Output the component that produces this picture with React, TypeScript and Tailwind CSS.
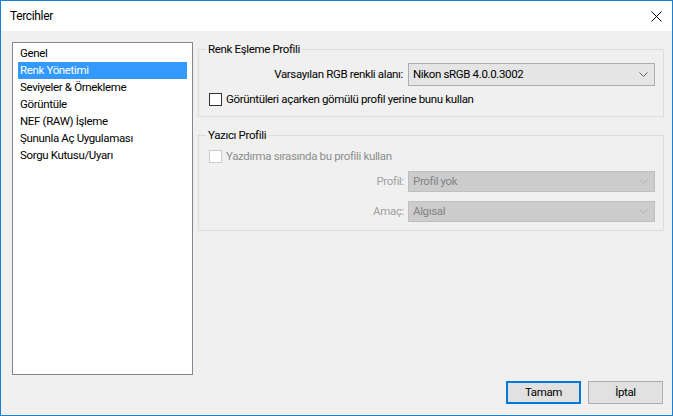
import React from "react";

const font = { fontFamily: 'Roboto, "Segoe UI", sans-serif' };

const items = [
  "Genel",
  "Renk Yönetimi",
  "Seviyeler & Örnekleme",
  "Görüntüle",
  "NEF (RAW) İşleme",
  "Şununla Aç Uygulaması",
  "Sorgu Kutusu/Uyarı",
];

const Chevron: React.FC<{ disabled?: boolean }> = ({ disabled }) => (
  <svg width="9" height="5" viewBox="0 0 9 5" className="mr-[6px]">
    <path d="M0.5 0.5 L4.5 4.5 L8.5 0.5" fill="none" stroke={disabled ? "#b3b3b3" : "#606060"} strokeWidth="1" />
  </svg>
);

const Select: React.FC<{ value: string; disabled?: boolean; h: string }> = ({ value, disabled, h }) => (
  <div
    className={`flex w-[247px] items-center justify-between border pl-[4px] ${h} ${
      disabled ? "border-[#bfbfbf] bg-[#cccccc] text-[#838383]" : "border-[#adadad] bg-[#e5e5e5] text-black"
    }`}
  >
    <span>{value}</span>
    <Chevron disabled={disabled} />
  </div>
);

const Check: React.FC<{ label: string; disabled?: boolean }> = ({ label, disabled }) => (
  <div className="flex items-center">
    <div className={`h-[13px] w-[13px] border bg-white ${disabled ? "border-[#cccccc]" : "border-[#333333]"}`} />
    <span className={`ml-[4px] ${disabled ? "text-[#8d8d8d]" : "text-black"}`}>{label}</span>
  </div>
);

export default function App() {
  return (
    <div
      className="flex h-[416px] w-[673px] flex-col border border-[#1c7fd0] bg-[#f0f0f0] text-[11.5px] tracking-[-0.35px] text-black"
      style={font}
    >
      {/* title bar */}
      <div className="flex h-[30px] items-center justify-between bg-white pl-[9px] pr-[10px] text-[12px]">
        <span>Tercihler</span>
        <svg width="11" height="11" viewBox="0 0 11 11">
          <path d="M0.5 0.5 L10.5 10.5 M10.5 0.5 L0.5 10.5" stroke="#000" strokeWidth="1" />
        </svg>
      </div>

      <div className="flex flex-1 flex-col">
        <div className="flex pl-[11px] pt-[11px]">
          {/* list */}
          <div className="h-[333px] w-[181px] border border-[#828790] bg-white px-[5px] pt-[2px]">
            {items.map((it, i) => (
              <div
                key={it}
                className={`flex h-[17px] items-center pl-[2px] ${i === 1 ? "bg-[#3399ff] text-white" : ""}`}
              >
                {it}
              </div>
            ))}
          </div>

          {/* right panel */}
          <div className="ml-[5px] flex w-[466px] flex-col">
            <fieldset className="h-[75px] border border-[#dcdcdc] pl-[10px] pr-[8px]">
              <legend className="ml-[-3px] px-[2px] leading-[15px]">Renk Eşleme Profili</legend>
              <div className="mt-[6px] flex items-center justify-end">
                <span className="mr-[5px]">Varsayılan RGB renkli alanı:</span>
                <Select value="Nikon sRGB 4.0.0.3002" h="h-[23px]" />
              </div>
              <div className="mt-[5px]">
                <Check label="Görüntüleri açarken gömülü profil yerine bunu kullan" />
              </div>
            </fieldset>

            <fieldset className="mt-[11px] h-[103px] border border-[#dcdcdc] pl-[10px] pr-[8px]">
              <legend className="ml-[-3px] px-[2px] leading-[15px]">Yazıcı Profili</legend>
              <div className="mt-[5px]">
                <Check label="Yazdırma sırasında bu profili kullan" disabled />
              </div>
              <div className="mt-[6px] flex items-center justify-end text-[#a0a0a0]">
                <span className="mr-[4px]">Profil:</span>
                <Select value="Profil yok" disabled h="h-[21px]" />
              </div>
              <div className="mt-[9px] flex items-center justify-end text-[#a0a0a0]">
                <span className="mr-[4px]">Amaç:</span>
                <Select value="Algısal" disabled h="h-[21px]" />
              </div>
            </fieldset>
          </div>
        </div>

        {/* buttons */}
        <div className="mt-[6px] flex justify-end gap-[7px] pr-[9px]">
          <button className="h-[23px] w-[75px] border-2 border-[#0078d7] bg-[#e1e1e1]">Tamam</button>
          <button className="h-[23px] w-[75px] border border-[#adadad] bg-[#e1e1e1]">İptal</button>
        </div>
      </div>
    </div>
  );
}
